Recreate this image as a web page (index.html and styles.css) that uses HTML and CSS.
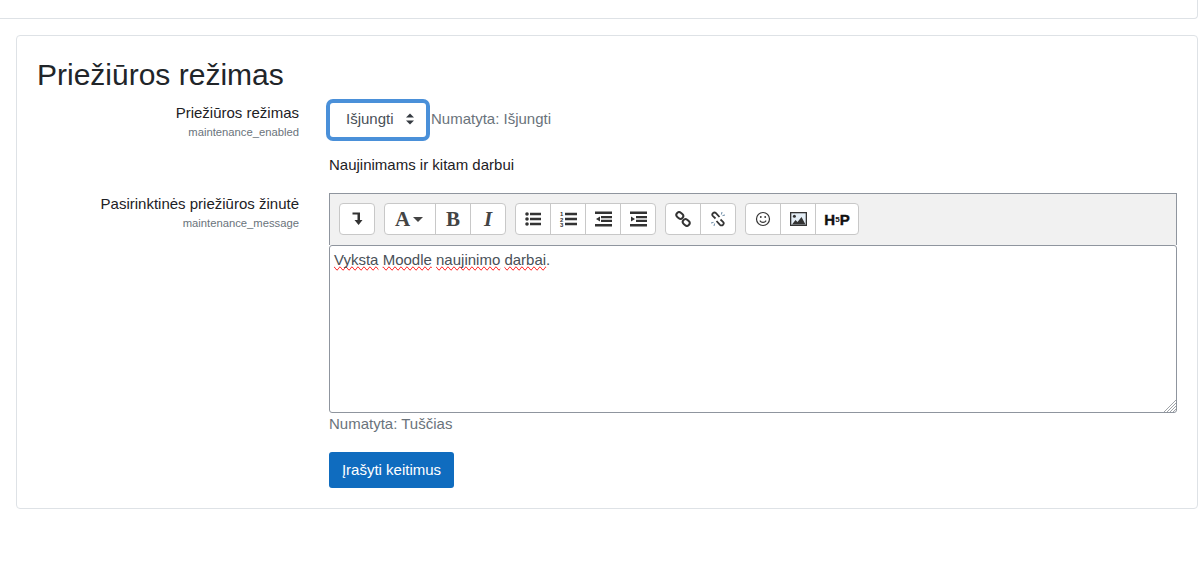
FILE: index.html
```html
<!DOCTYPE html>
<html lang="lt">
<head>
  <meta charset="UTF-8">
  <title>Priežiūros režimas</title>
  <link rel="stylesheet" href="styles.css">
</head>
<body>
  <div class="top-card"></div>

  <main class="card">
    <h2>Priežiūros režimas</h2>

    <div class="setting setting-enabled">
      <div class="setting-label">
        <label for="enabled">Priežiūros režimas</label>
        <span class="setting-name">maintenance_enabled</span>
      </div>
      <div class="setting-field">
        <div class="select-row">
          <div class="select-box" id="enabled">
            <span>Išjungti</span>
            <svg width="8" height="12" viewBox="0 0 8 12"><path d="M4 0.5 8 4.6H0zM4 11.5 0 7.4h8z" fill="#343a40"/></svg>
          </div>
          <span class="default-note default-enabled">Numatyta: Išjungti</span>
        </div>
        <p class="setting-desc">Naujinimams ir kitam darbui</p>
      </div>
    </div>

    <div class="setting">
      <div class="setting-label">
        <label for="message">Pasirinktinės priežiūros žinutė</label>
        <span class="setting-name">maintenance_message</span>
      </div>
      <div class="setting-field">
        <div class="toolbar">
          <div class="btn-group">
            <button class="tool" type="button">
              <svg width="16" height="16" viewBox="0 0 16 16"><path d="M3.500 1.500H11V9H13.500L9.600 14 5.500 9H8.500V3.500H3.500z" fill="#333"/></svg>
            </button>
          </div>
          <div class="btn-group">
            <button class="tool tool-font" type="button"><span class="serif-a">A</span><i class="caret"></i></button>
            <button class="tool serif-b" type="button">B</button>
            <button class="tool serif-i" type="button">I</button>
          </div>
          <div class="btn-group">
            <button class="tool" type="button">
              <svg width="16" height="16" viewBox="0 0 16 16" fill="#333"><circle cx="2" cy="3" r="1.800"/><circle cx="2" cy="8" r="1.800"/><circle cx="2" cy="13" r="1.800"/><path d="M5 1.700h11v2.600H5zM5 6.700h11v2.600H5zM5 11.700h11v2.600H5z"/></svg>
            </button>
            <button class="tool" type="button">
              <svg width="18" height="16" viewBox="0 0 18 16" fill="#333"><text class="list-num" x="1" y="5">1</text><text class="list-num" x="1" y="10.500">2</text><text class="list-num" x="1" y="16">3</text><path d="M6 1.700h12v2.600H6zM6 6.700h12v2.600H6zM6 11.700h12v2.600H6z"/></svg>
            </button>
            <button class="tool" type="button">
              <svg width="17" height="16" viewBox="0 0 17 16" fill="#333"><path d="M0 .5h17v2.500H0zM6 5h11v2.200H6zM6 8.800h11V11H6zM0 13h17v2.500H0zM5 5.400v5.200L1 8z"/></svg>
            </button>
            <button class="tool" type="button">
              <svg width="17" height="16" viewBox="0 0 17 16" fill="#333"><path d="M0 .5h17v2.500H0zM6 5h11v2.200H6zM6 8.800h11V11H6zM0 13h17v2.500H0zM1 5.400v5.200L5 8z"/></svg>
            </button>
          </div>
          <div class="btn-group">
            <button class="tool" type="button">
              <svg width="16" height="16" viewBox="0 0 16 16" fill="none" stroke="#333" stroke-width="2"><rect x="1.200" y="1.800" width="7.200" height="5.400" rx="2.600" transform="rotate(40 4.800 4.500)"/><rect x="7.600" y="8.800" width="7.200" height="5.400" rx="2.600" transform="rotate(40 11.200 11.500)"/></svg>
            </button>
            <button class="tool" type="button">
              <svg width="16" height="16" viewBox="0 0 16 16" fill="none"><path d="M5.500 7.500 3 5.200A2.100 2.100 0 0 1 6 2.200L9.500 6M10.500 8.500 13 10.800A2.100 2.100 0 0 1 10 13.800L6.500 10" stroke="#333" stroke-width="1.800"/><path d="M12 1l-.6 2.500M15 4l-2.500.6M4 15l.6-2.500M1 12l2.500-.6" stroke="#6a8aa5" stroke-width="1"/></svg>
            </button>
          </div>
          <div class="btn-group">
            <button class="tool" type="button">
              <svg width="16" height="16" viewBox="0 0 16 16" fill="none" stroke="#333"><circle cx="8" cy="8" r="6.500" stroke-width="1.200"/><path d="M4.800 9.600c1.600 2.400 4.800 2.400 6.400 0" stroke-width="1.100"/><circle cx="5.800" cy="6" r=".9" fill="#333" stroke="none"/><circle cx="10.200" cy="6" r=".9" fill="#333" stroke="none"/></svg>
            </button>
            <button class="tool" type="button">
              <svg width="17" height="14" viewBox="0 0 17 14"><path d="M0 0h17v14H0z" fill="#333"/><path d="M1.300 1.300h14.400v11.400H1.300z" fill="#e4eef6"/><path d="M2 12.500 5.500 8l2 2 4-5 4 7.500z" fill="#333"/><circle cx="4.400" cy="4.200" r="1.500" fill="#333"/></svg>
            </button>
            <button class="tool tool-h5p" type="button"><span>H</span><small>5</small><span>P</span></button>
          </div>
        </div>
        <div class="editor" id="message">
          <span class="misspelled">Vyksta</span> <span class="misspelled">Moodle</span> <span class="misspelled">naujinimo</span> <span class="misspelled">darbai</span>.
          <svg class="resize-grip" width="12" height="12" viewBox="0 0 12 12" stroke="#a0a4a8" stroke-width="1"><path d="M12 0 0 12M12 3 3 12M12 6 6 12M12 9 9 12"/></svg>
        </div>
        <div class="default-note default-message">Numatyta: Tuščias</div>
        <button class="btn-save" type="button">Įrašyti keitimus</button>
      </div>
    </div>
  </main>
</body>
</html>
```

FILE: styles.css
```css
body {
  font-family: "Liberation Sans", Arial, sans-serif;
  font-size: 15px;
  line-height: 1.5;
  margin: 0;
  padding: 0 2px 0 0;
  background-color: #fff;
  color: #1d2125;
  overflow: hidden;
}
.top-card {
  height: 18px;
  border: 1px solid #dee2e6;
  border-top: none;
  border-left: none;
  border-radius: 0 0 4px 0;
}
.card {
  margin: 16px 0 0 16px;
  height: 474px;
  box-sizing: border-box;
  padding: 19px 20px 20px;
  border: 1px solid #dee2e6;
  border-radius: 4px;
}
h2 {
  margin: 0;
  font-size: 30px;
  font-weight: 400;
  line-height: 39px;
  color: #212529;
}
.setting {
  display: flex;
}
.setting-enabled {
  height: 93px;
  margin-top: 6px;
}
.setting-enabled .setting-label {
  padding-top: 2px;
}
.setting-label {
  width: 262px;
  flex: none;
  text-align: right;
}
.setting-label label {
  display: block;
}
.setting-name {
  display: block;
  margin-top: -1px;
  font-size: 11.25px;
  line-height: 17px;
  color: #6a737b;
}
.setting-field {
  margin-left: 30px;
  flex: 1;
}
.select-row {
  display: flex;
  align-items: center;
}
.select-box {
  display: flex;
  align-items: center;
  justify-content: space-between;
  box-sizing: border-box;
  width: 96px;
  height: 34px;
  padding: 0 12px 2px 16px;
  margin: 3px 1px;
  border-radius: 3px;
  background: #fff;
  box-shadow: 0 0 0 4px #4a90d9;
  color: #495057;
}
.default-note {
  color: #6a737b;
  margin-left: 4px;
}
.default-enabled {
  margin-bottom: 2px;
}
.setting-desc {
  margin: 14px 0 0;
}
.toolbar {
  display: flex;
  gap: 9px;
  box-sizing: border-box;
  height: 52px;
  padding: 9px;
  background: #f1f1f1;
  border: 1px solid #8f959e;
  border-bottom: none;
}
.btn-group {
  display: flex;
  height: 32px;
  box-sizing: border-box;
  background: #fff;
  border: 1px solid #c8c8c8;
  border-radius: 4px;
}
.tool {
  display: flex;
  align-items: center;
  justify-content: center;
  width: 35px;
  height: 100%;
  padding: 0;
  border: none;
  border-left: 1px solid #c8c8c8;
  background: none;
  color: #444;
  font-family: "Liberation Serif", serif;
  font-size: 21px;
  font-weight: 700;
}
.tool:first-child {
  width: 34px;
  border-left: none;
}
.tool.tool-font {
  width: 50px;
  padding-right: 2px;
}
.tool-h5p {
  width: 43px;
  color: #111;
  font-family: "Liberation Sans", sans-serif;
  font-size: 15px;
  -webkit-text-stroke: 0.4px #111;
}
.tool-h5p small {
  font-size: 8px;
  -webkit-text-stroke: 0;
}
.serif-i {
  font-style: italic;
}
.list-num {
  font-family: "Liberation Sans", sans-serif;
  font-size: 6px;
  font-weight: 700;
}
.caret {
  width: 0;
  height: 0;
  margin-left: 3px;
  border-left: 5.5px solid transparent;
  border-right: 5.5px solid transparent;
  border-top: 5.5px solid #444;
}
.editor {
  position: relative;
  box-sizing: border-box;
  height: 168px;
  padding: 3px 4px;
  border: 1px solid #8f959e;
  border-radius: 3px;
  color: #495057;
}
.misspelled {
  text-decoration-line: spelling-error;
}
.resize-grip {
  position: absolute;
  right: 0;
  bottom: 0;
}
.default-message {
  margin-left: 0;
}
.btn-save {
  display: block;
  margin-top: 16px;
  width: 125px;
  height: 36px;
  padding: 0;
  border: none;
  border-radius: 3px;
  background: #0f6cbf;
  color: #fff;
  font-family: inherit;
  font-size: 15px;
}
```
